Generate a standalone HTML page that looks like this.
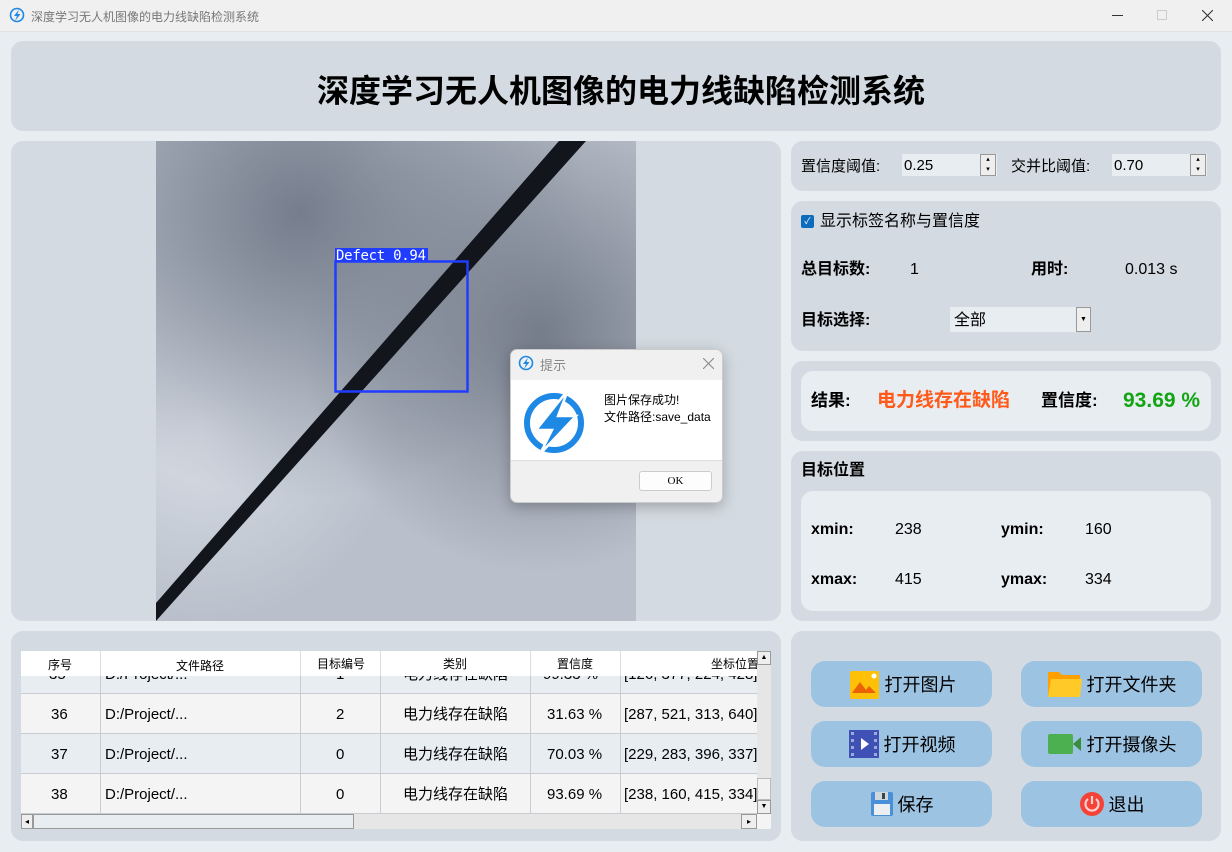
<!DOCTYPE html>
<html><head><meta charset="utf-8"><style>
*{margin:0;padding:0;box-sizing:border-box}
body{width:1232px;height:852px;background:#e8edf2;font-family:"Liberation Sans","Noto Sans CJK SC",sans-serif;position:relative;overflow:hidden;color:#000}
.a{position:absolute;white-space:nowrap}
.t{position:absolute;white-space:nowrap;height:20px;line-height:20px}
.p{position:absolute;background:#d3dae1;border-radius:12px}
.in{position:absolute;background:#e8edf2;border-radius:12px}
.b{font-weight:bold}
.btn{position:absolute;width:181px;height:46px;background:#9dc3e2;border-radius:14px;font-size:18px;display:flex;align-items:center;justify-content:center;gap:4px}
.row{position:absolute;left:0;width:736px;height:40px;border-bottom:1px solid #c8ccd0;font-size:15px}
.row span{position:absolute;top:11px;line-height:20px;white-space:nowrap}
.vl{position:absolute;top:0;width:1px;height:163px;background:#c8ccd0}
</style></head><body>
<div class="a" style="left:0;top:0;width:1232px;height:32px;background:#f0f0f0;border-bottom:1px solid #e0e0e0"></div>
<svg class="a" style="left:9px;top:7px" width="16" height="16" viewBox="0 0 16 16"><circle cx="8" cy="8" r="6.5" fill="none" stroke="#1e88e5" stroke-width="1.6"/><path d="M10 2.5 L5 9 H8 L6 14 L11.5 7 H8.5 Z" fill="#1e88e5"/></svg>
<div class="a" style="left:31px;top:8px;font-size:12px;color:#777">深度学习无人机图像的电力线缺陷检测系统</div>
<div class="a" style="left:1112px;top:15px;width:11px;height:1px;background:#333"></div>
<div class="a" style="left:1157px;top:10px;width:10px;height:10px;border:1px solid #ccc"></div>
<svg class="a" style="left:1202px;top:10px" width="11" height="11"><path d="M0 0L11 11M11 0L0 11" stroke="#333" stroke-width="1.1"/></svg>

<div class="p" style="left:11px;top:41px;width:1210px;height:90px"></div>
<div class="a b" style="left:0;width:1242px;top:71px;text-align:center;font-size:32px;line-height:40px">深度学习无人机图像的电力线缺陷检测系统</div>

<div class="p" style="left:11px;top:141px;width:770px;height:480px"></div>
<svg class="a" style="left:156px;top:141px" width="480" height="480" viewBox="0 0 480 480">
<defs><radialGradient id="g1" cx="0.3" cy="0.15" r="0.6"><stop offset="0" stop-color="#767e8d"/><stop offset="1" stop-color="#767e8d" stop-opacity="0"/></radialGradient>
<radialGradient id="g2" cx="0.8" cy="0.4" r="0.5"><stop offset="0" stop-color="#757c8a"/><stop offset="1" stop-color="#757c8a" stop-opacity="0"/></radialGradient>
<radialGradient id="g3" cx="0.1" cy="0.6" r="0.4"><stop offset="0" stop-color="#d8dde5"/><stop offset="1" stop-color="#d8dde5" stop-opacity="0"/></radialGradient></defs>
<rect width="480" height="480" fill="#b9c0cb"/>
<rect width="480" height="480" fill="url(#g3)"/>
<rect width="480" height="480" fill="url(#g1)"/>
<rect width="480" height="480" fill="url(#g2)"/>
<path d="M0 462 L403 0 L430 0 L0 480 Z" fill="#12151b"/>
<rect x="179.5" y="120.5" width="132" height="130" fill="none" stroke="#1f3cff" stroke-width="2.5"/>
<rect x="179" y="107" width="93" height="14" fill="#1f3cff"/>
<text x="180" y="119" fill="#fff" font-size="14" font-family="DejaVu Sans Mono,monospace" textLength="90">Defect 0.94</text>
</svg>

<div class="p" style="left:791px;top:141px;width:430px;height:50px"></div>
<div class="t" style="left:801px;top:157px;font-size:15px">置信度阈值:</div>
<div class="t" style="left:902px;top:154px;width:95px;height:22px;background:#e8edf2;font-size:15px;padding-left:2px;line-height:24px">0.25</div>
<div class="a" style="left:980px;top:154px;width:16px;height:22px;border:1px solid #999;background:#eee;font-size:7px;text-align:center;line-height:10px">▴<br>▾</div>
<div class="t" style="left:1011px;top:157px;font-size:15px">交并比阈值:</div>
<div class="t" style="left:1112px;top:154px;width:95px;height:22px;background:#e8edf2;font-size:15px;padding-left:2px;line-height:24px">0.70</div>
<div class="a" style="left:1190px;top:154px;width:16px;height:22px;border:1px solid #999;background:#eee;font-size:7px;text-align:center;line-height:10px">▴<br>▾</div>

<div class="p" style="left:791px;top:201px;width:430px;height:150px"></div>
<div class="a" style="left:801px;top:215px;width:13px;height:13px;background:#0f6cbd;border-radius:2px;color:#fff;font-size:9px;text-align:center;line-height:13px">✓</div>
<div class="t" style="left:820px;top:212px;font-size:16px">显示标签名称与置信度</div>
<div class="t b" style="left:801px;top:260px;font-size:16px">总目标数:</div>
<div class="t" style="left:910px;top:260px;font-size:16px">1</div>
<div class="t b" style="left:1031px;top:260px;font-size:16px">用时:</div>
<div class="t" style="left:1125px;top:260px;font-size:16px">0.013 s</div>
<div class="t b" style="left:801px;top:311px;font-size:16px">目标选择:</div>
<div class="t" style="left:950px;top:307px;width:141px;height:25px;background:#e8edf2;font-size:16px;padding-left:4px;line-height:27px">全部</div>
<div class="a" style="left:1076px;top:307px;width:15px;height:25px;border:1px solid #999;background:#eee;font-size:7px;text-align:center;line-height:23px">▼</div>

<div class="p" style="left:791px;top:361px;width:430px;height:80px"></div>
<div class="in" style="left:801px;top:371px;width:410px;height:60px"></div>
<div class="t b" style="left:811px;top:391px;font-size:17px">结果:</div>
<div class="t b" style="left:877px;top:391px;font-size:19px">
<span style="color:#ff5a1a">电力线存在缺陷</span></div>
<div class="t b" style="left:1041px;top:391px;font-size:17px">置信度:</div>
<div class="t b" style="left:1123px;top:391px;font-size:21px;color:#12a512">93.69 %</div>

<div class="p" style="left:791px;top:451px;width:430px;height:170px"></div>
<div class="t b" style="left:801px;top:461px;font-size:16px">目标位置</div>
<div class="in" style="left:801px;top:491px;width:410px;height:120px"></div>
<div class="t b" style="left:811px;top:520px;font-size:16px">xmin:</div>
<div class="t" style="left:895px;top:520px;font-size:16px">238</div>
<div class="t b" style="left:1001px;top:520px;font-size:16px">ymin:</div>
<div class="t" style="left:1085px;top:520px;font-size:16px">160</div>
<div class="t b" style="left:811px;top:570px;font-size:16px">xmax:</div>
<div class="t" style="left:895px;top:570px;font-size:16px">415</div>
<div class="t b" style="left:1001px;top:570px;font-size:16px">ymax:</div>
<div class="t" style="left:1085px;top:570px;font-size:16px">334</div>

<div class="p" style="left:11px;top:631px;width:770px;height:210px"></div>
<div class="a" style="left:21px;top:651px;width:750px;height:178px;background:#f4f4f4;overflow:hidden">
<div class="row" style="top:3px;background:#e8edf2"><span style="left:28px">35</span><span style="left:84px">D:/Project/...</span><span style="left:315px">1</span><span style="left:382px">电力线存在缺陷</span><span style="left:522px">99.33 %</span><span style="left:603px">[126, 377, 224, 428]</span></div>
<div class="row" style="top:43px"><span style="left:30px">36</span><span style="left:84px">D:/Project/...</span><span style="left:315px">2</span><span style="left:382px">电力线存在缺陷</span><span style="left:526px">31.63 %</span><span style="left:603px">[287, 521, 313, 640]</span></div>
<div class="row" style="top:83px;background:#e8edf2"><span style="left:30px">37</span><span style="left:84px">D:/Project/...</span><span style="left:315px">0</span><span style="left:382px">电力线存在缺陷</span><span style="left:526px">70.03 %</span><span style="left:603px">[229, 283, 396, 337]</span></div>
<div class="row" style="top:123px"><span style="left:30px">38</span><span style="left:84px">D:/Project/...</span><span style="left:315px">0</span><span style="left:382px">电力线存在缺陷</span><span style="left:526px">93.69 %</span><span style="left:603px">[238, 160, 415, 334]</span></div>
<div class="vl" style="left:79px"></div><div class="vl" style="left:279px"></div><div class="vl" style="left:359px"></div><div class="vl" style="left:509px"></div><div class="vl" style="left:599px"></div>
<div class="a" style="left:0;top:0;width:736px;height:25px;background:#fff;font-size:12px">
<span class="a" style="left:27px;top:5px">序号</span><span class="a" style="left:155px;top:6px">文件路径</span><span class="a" style="left:296px;top:4px">目标编号</span><span class="a" style="left:422px;top:4px">类别</span><span class="a" style="left:536px;top:4px">置信度</span><span class="a" style="left:690px;top:4px">坐标位置</span>
<div class="a" style="left:79px;top:0;width:1px;height:25px;background:#ddd"></div><div class="a" style="left:279px;top:0;width:1px;height:25px;background:#ddd"></div><div class="a" style="left:359px;top:0;width:1px;height:25px;background:#ddd"></div><div class="a" style="left:509px;top:0;width:1px;height:25px;background:#ddd"></div><div class="a" style="left:599px;top:0;width:1px;height:25px;background:#ddd"></div>
</div>
<div class="a" style="left:736px;top:0;width:14px;height:163px;background:#e6e6e6"></div>
<div class="a" style="left:736px;top:0;width:14px;height:14px;background:#eee;border:1px solid #999;font-size:7px;text-align:center;line-height:12px">▲</div>
<div class="a" style="left:736px;top:127px;width:14px;height:22px;background:#f2f2f2;border:1px solid #bbb"></div>
<div class="a" style="left:736px;top:149px;width:14px;height:14px;background:#eee;border:1px solid #999;font-size:7px;text-align:center;line-height:12px">▼</div>
<div class="a" style="left:0;top:163px;width:736px;height:15px;background:#e6e6e6"></div>
<div class="a" style="left:0;top:163px;width:12px;height:15px;background:#eee;border:1px solid #999;font-size:8px;line-height:13px;text-align:center">◂</div>
<div class="a" style="left:12px;top:163px;width:321px;height:15px;background:#e8edf2;border:1px solid #999"></div>
<div class="a" style="left:720px;top:163px;width:16px;height:15px;background:#eee;border:1px solid #999;font-size:8px;line-height:13px;text-align:center">▸</div>
</div>

<div class="p" style="left:791px;top:631px;width:430px;height:210px"></div>
<div class="btn" style="left:811px;top:661px"><svg width="34" height="30" viewBox="0 0 34 30"><rect x="3" y="2" width="29" height="28" rx="2" fill="#ffc107"/><path d="M5 24 L13 13 L19 21 L22 17 L29 24 Z" fill="#e65100" opacity=".85"/><circle cx="27" cy="7" r="2.5" fill="#fff"/></svg>打开图片</div>
<div class="btn" style="left:1021px;top:661px"><svg width="36" height="30" viewBox="0 0 36 30"><path d="M1 3 H12 L15 6 H33 V26 H1 Z" fill="#ffa000"/><path d="M4 10 H35 L33 28 H1 Z" fill="#ffca28"/></svg>打开文件夹</div>
<div class="btn" style="left:811px;top:721px"><svg width="32" height="30" viewBox="0 0 32 30"><rect x="1" y="1" width="30" height="28" fill="#3f51b5"/><g fill="#9fa8da"><rect x="3" y="3" width="3" height="3"/><rect x="3" y="10" width="3" height="3"/><rect x="3" y="17" width="3" height="3"/><rect x="3" y="24" width="3" height="3"/><rect x="26" y="3" width="3" height="3"/><rect x="26" y="10" width="3" height="3"/><rect x="26" y="17" width="3" height="3"/><rect x="26" y="24" width="3" height="3"/></g><path d="M13 9 L21 15 L13 21 Z" fill="#fff"/></svg>打开视频</div>
<div class="btn" style="left:1021px;top:721px"><svg width="36" height="30" viewBox="0 0 36 30"><rect x="1" y="5" width="25" height="20" rx="2" fill="#4caf50"/><path d="M26 15 L34 8 V22 Z" fill="#388e3c"/></svg>打开摄像头</div>
<div class="btn" style="left:811px;top:781px"><svg width="24" height="26" viewBox="0 0 24 26"><rect x="1" y="1" width="22" height="24" rx="2" fill="#4a90d9"/><rect x="5" y="1" width="13" height="8" fill="#cfd8dc"/><rect x="12" y="2" width="3" height="6" fill="#37474f"/><rect x="4" y="13" width="16" height="11" fill="#eceff1"/></svg>保存</div>
<div class="btn" style="left:1021px;top:781px"><svg width="26" height="26" viewBox="0 0 26 26"><circle cx="13" cy="13" r="12" fill="#f44336"/><path d="M9 8 A6.5 6.5 0 1 0 17 8" fill="none" stroke="#ffcdd2" stroke-width="2.2"/><path d="M13 5 V13" stroke="#ffcdd2" stroke-width="2.2"/></svg>退出</div>

<div class="a" style="left:510px;top:349px;width:213px;height:154px;background:#f0f0f0;border:1px solid #ccc;border-radius:7px;box-shadow:0 4px 14px rgba(0,0,0,.25);overflow:hidden">
<svg class="a" style="left:7px;top:5px" width="16" height="16" viewBox="0 0 16 16"><circle cx="8" cy="8" r="6.5" fill="none" stroke="#1e88e5" stroke-width="1.6"/><path d="M10 2.5 L5 9 H8 L6 14 L11.5 7 H8.5 Z" fill="#1e88e5"/></svg>
<div class="a" style="left:29px;top:5px;font-size:13px;color:#888">提示</div>
<svg class="a" style="left:192px;top:8px" width="11" height="11"><path d="M0 0L11 11M11 0L0 11" stroke="#888" stroke-width="1.1"/></svg>
<div class="a" style="left:0;top:30px;width:213px;height:81px;background:#fff;border-bottom:1px solid #ddd"></div>
<svg class="a" style="left:11px;top:40px" width="64" height="64" viewBox="0 0 64 64"><circle cx="32" cy="33" r="27" fill="none" stroke="#1e88e5" stroke-width="6"/><path d="M46 0 L14 40 H30 L18 64 L54 26 H36 Z" fill="#1e88e5" stroke="#fff" stroke-width="2.5"/></svg>
<div class="a" style="left:93px;top:42px;font-size:12px;line-height:17px">图片保存成功!<br>文件路径:save_data</div>
<div class="a" style="left:128px;top:121px;width:73px;height:20px;background:#fdfdfd;border:1px solid #ccc;border-radius:3px;font-size:11px;text-align:center;line-height:18px;font-family:'Liberation Serif',serif">OK</div>
</div>
</body></html>
